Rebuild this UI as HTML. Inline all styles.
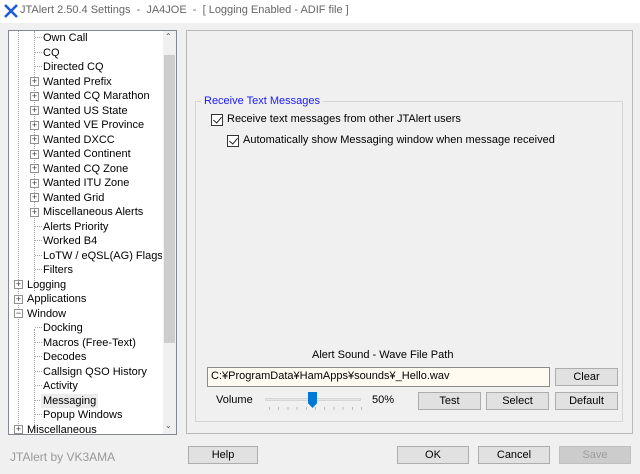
<!DOCTYPE html>
<html><head><style>
*{margin:0;padding:0;box-sizing:border-box}
body{width:640px;height:474px;background:#f0f0f0;font-family:"Liberation Sans","Noto Sans CJK JP",sans-serif;font-size:11px;color:#000;position:relative;overflow:hidden}
.a{position:absolute;white-space:nowrap}
.title{left:0;top:0;width:640px;height:23px;background:#fff}
.tree{left:8px;top:30px;width:169px;height:405px;background:#fff;border:1px solid #828790;overflow:hidden}
.sb{left:163px;top:31px;width:13px;height:403px;background:#f0f0f0}
.thumb{left:164px;top:55px;width:11px;height:288px;background:#cdcdcd}
.it{position:absolute;line-height:14px;height:14px}
.pm{position:absolute;width:9px;height:9px;border:1px solid #919191;background:#fff;font-size:9px;line-height:7px;text-align:center;color:#333}
.panel{left:186px;top:30px;width:447px;height:404px;border:1px solid #b9b9b9;background:#f0f0f0}
.grp{left:195px;top:101px;width:428px;height:321px;border:1px solid #d5d5d5}
.btn{position:absolute;background:#e1e1e1;border:1px solid #adadad;text-align:center;line-height:16px;height:18px}
.cb{position:absolute;width:12px;height:12px;border:1px solid #333;background:#fff}
.cb:after{content:"";position:absolute;left:3px;top:0px;width:4px;height:7px;border:solid #222;border-width:0 1px 1px 0;transform:rotate(40deg)}
.d{position:absolute;border-top:1px dotted #a0a0a0;width:7px}
</style></head><body>
<div class="a title"></div>
<svg class="a" style="left:4px;top:4px" width="14" height="14"><path d="M1 1L13 13M13 1L1 13" stroke="#1f5bd6" stroke-width="2.6"/></svg>
<div class="a" style="left:20px;top:4px;color:#666;font-size:11px">JTAlert 2.50.4 Settings &nbsp;- &nbsp;JA4JOE &nbsp;- &nbsp;[ Logging Enabled - ADIF file ]</div>

<div class="a tree">
<div style="position:absolute;left:25px;top:0;height:260px;border-left:1px dotted #a0a0a0"></div>
<div style="position:absolute;left:25px;top:298px;height:120px;border-left:1px dotted #a0a0a0"></div>
<div style="position:absolute;left:9px;top:0;height:405px;border-left:1px dotted #a0a0a0"></div>
</div>
<div class="a sb"></div><div class="a thumb"></div>
<div class="a" style="left:165px;top:32px;font-size:8px;color:#555">&#8963;</div>
<div class="a" style="left:165px;top:421px;font-size:8px;color:#555">&#8964;</div>
<div class="a" style="left:9px;top:31px;width:153px;height:403px;overflow:hidden">
<div style="position:relative">
<div class="d" style="left:26px;top:6px"></div><div class="it" style="left:34px;top:0">Own Call</div>
<div class="d" style="left:26px;top:20.5px"></div><div class="it" style="left:34px;top:14.5px">CQ</div>
<div class="d" style="left:26px;top:35px"></div><div class="it" style="left:34px;top:29px">Directed CQ</div>
<div class="pm" style="left:21px;top:46px">+</div><div class="it" style="left:34px;top:43.5px">Wanted Prefix</div>
<div class="pm" style="left:21px;top:60.5px">+</div><div class="it" style="left:34px;top:58px">Wanted CQ Marathon</div>
<div class="pm" style="left:21px;top:75px">+</div><div class="it" style="left:34px;top:72.5px">Wanted US State</div>
<div class="pm" style="left:21px;top:89.5px">+</div><div class="it" style="left:34px;top:87px">Wanted VE Province</div>
<div class="pm" style="left:21px;top:104px">+</div><div class="it" style="left:34px;top:101.5px">Wanted DXCC</div>
<div class="pm" style="left:21px;top:118.5px">+</div><div class="it" style="left:34px;top:116px">Wanted Continent</div>
<div class="pm" style="left:21px;top:133px">+</div><div class="it" style="left:34px;top:130.5px">Wanted CQ Zone</div>
<div class="pm" style="left:21px;top:147.5px">+</div><div class="it" style="left:34px;top:145px">Wanted ITU Zone</div>
<div class="pm" style="left:21px;top:162px">+</div><div class="it" style="left:34px;top:159.5px">Wanted Grid</div>
<div class="pm" style="left:21px;top:176.5px">+</div><div class="it" style="left:34px;top:174px">Miscellaneous Alerts</div>
<div class="d" style="left:26px;top:194.5px"></div><div class="it" style="left:34px;top:188.5px">Alerts Priority</div>
<div class="d" style="left:26px;top:209px"></div><div class="it" style="left:34px;top:203px">Worked B4</div>
<div class="d" style="left:26px;top:223.5px"></div><div class="it" style="left:34px;top:217.5px">LoTW / eQSL(AG) Flags</div>
<div class="d" style="left:26px;top:238px"></div><div class="it" style="left:34px;top:232px">Filters</div>
<div class="pm" style="left:5px;top:249px">+</div><div class="it" style="left:18px;top:246.5px">Logging</div>
<div class="pm" style="left:5px;top:263.5px">+</div><div class="it" style="left:18px;top:261px">Applications</div>
<div class="pm" style="left:5px;top:278px">−</div><div class="it" style="left:18px;top:275.5px">Window</div>
<div class="d" style="left:26px;top:296px"></div><div class="it" style="left:34px;top:290px">Docking</div>
<div class="d" style="left:26px;top:310.5px"></div><div class="it" style="left:34px;top:304.5px">Macros (Free-Text)</div>
<div class="d" style="left:26px;top:325px"></div><div class="it" style="left:34px;top:319px">Decodes</div>
<div class="d" style="left:26px;top:339.5px"></div><div class="it" style="left:34px;top:333.5px">Callsign QSO History</div>
<div class="d" style="left:26px;top:354px"></div><div class="it" style="left:34px;top:348px">Activity</div>
<div class="d" style="left:26px;top:368.5px"></div><div class="it" style="left:32px;top:362.5px;background:#ececec;padding:0 2px">Messaging</div>
<div class="d" style="left:26px;top:383px"></div><div class="it" style="left:34px;top:377px">Popup Windows</div>
<div class="pm" style="left:5px;top:394px">+</div><div class="it" style="left:18px;top:391.5px">Miscellaneous</div>
</div></div>

<div class="a panel"></div>
<div class="a grp"></div>
<div class="a" style="left:201px;top:95px;background:#f0f0f0;padding:0 3px;color:#1a1aff">Receive Text Messages</div>
<div class="cb" style="left:211px;top:114px"></div>
<div class="a" style="left:227px;top:113px">Receive text messages from other JTAlert users</div>
<div class="cb" style="left:227px;top:135px"></div>
<div class="a" style="left:243px;top:134px">Automatically show Messaging window when message received</div>

<div class="a" style="left:312px;top:349px">Alert Sound - Wave File Path</div>
<div class="a" style="left:207px;top:367px;width:343px;height:20px;background:#fffbf0;border:1px solid #8a8a8a;padding:2px 3px">C:¥ProgramData¥HamApps¥sounds¥_Hello.wav</div>
<div class="btn" style="left:555px;top:368px;width:63px">Clear</div>
<div class="a" style="left:216px;top:394px">Volume</div>
<div class="a" style="left:265px;top:398px;width:96px;height:3px;background:#e7e7e7;border:1px solid #d6d6d6"></div>
<div class="a" style="left:308px;top:392px;width:9px;height:16px;background:#0078d7;clip-path:polygon(0 0,100% 0,100% 70%,50% 100%,0 70%)"></div>
<div class="a" style="left:269px;top:407px;width:100px;height:3px;background:repeating-linear-gradient(90deg,#bbb 0 1px,transparent 1px 9.2px)"></div>
<div class="a" style="left:372px;top:394px">50%</div>
<div class="btn" style="left:418px;top:392px;width:63px">Test</div>
<div class="btn" style="left:486px;top:392px;width:63px">Select</div>
<div class="btn" style="left:555px;top:392px;width:63px">Default</div>

<div class="a" style="left:10px;top:450px;color:#999;font-size:12px">JTAlert by VK3AMA</div>
<div class="btn" style="left:188px;top:446px;width:70px">Help</div>
<div class="btn" style="left:397px;top:446px;width:72px">OK</div>
<div class="btn" style="left:478px;top:446px;width:72px">Cancel</div>
<div class="btn" style="left:559px;top:446px;width:72px;color:#9d9d9d;background:#ccc;border-color:#bfbfbf">Save</div>
</body></html>
